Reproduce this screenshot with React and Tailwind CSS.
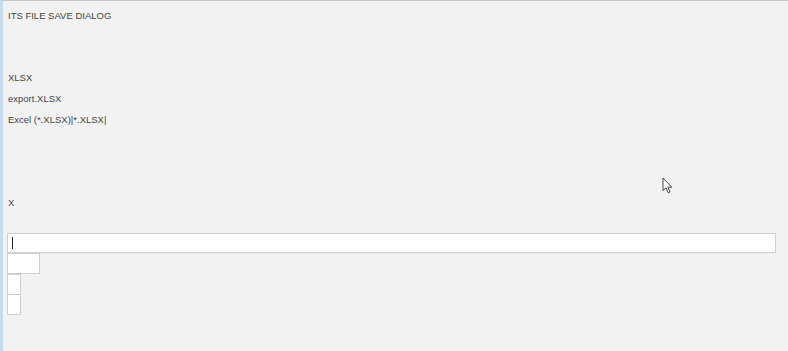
// ITS file save dialog – bare debug view
const rows = ['ITS FILE SAVE DIALOG', '', '', 'XLSX', 'export.XLSX', 'Excel (*.XLSX)|*.XLSX|', '', '', '', 'X']

function Pointer() {
  return (
    <svg viewBox="0 0 12 18" className="absolute left-[659px] top-[176px] w-[12px] h-[18px]">
      <path d="M1 1 L1 13.5 L4 10.8 L6.2 15.8 L8 15 L5.9 10.2 L9.8 10.2 Z" fill="#fff" stroke="#333" strokeWidth="0.9" strokeLinejoin="round" />
    </svg>
  )
}

export default function App() {
  return (
    <div className="relative w-[788px] h-[351px] overflow-hidden bg-[#f2f2f2] border-t border-[#c8c8c8] border-l-[3px] border-l-[#c6dbf0] font-['Liberation_Sans',Arial,sans-serif] text-[9.5px] text-[#454545]">
      <div className="pt-[4.6px] pl-[5px]">
        {rows.map((r, i) => (
          <div key={i} className="h-[20.8px] flex items-center">{r}</div>
        ))}
      </div>

      <div className="mt-[19px] pl-[4px] flex flex-col items-start">
        <div className="w-[769px] h-[20px] bg-white border border-[#cfcfcf] flex items-center pl-[4px]">
          <span className="w-px h-[12px] bg-[#222]" />
        </div>
        <div className="w-[33px] h-[21px] bg-white border border-[#cfcfcf]" />
        <div className="w-[14px] h-[21px] bg-white border border-[#cfcfcf]" />
        <div className="w-[14px] h-[21px] bg-white border border-[#cfcfcf] -mt-px" />
      </div>

      <Pointer />
    </div>
  )
}
